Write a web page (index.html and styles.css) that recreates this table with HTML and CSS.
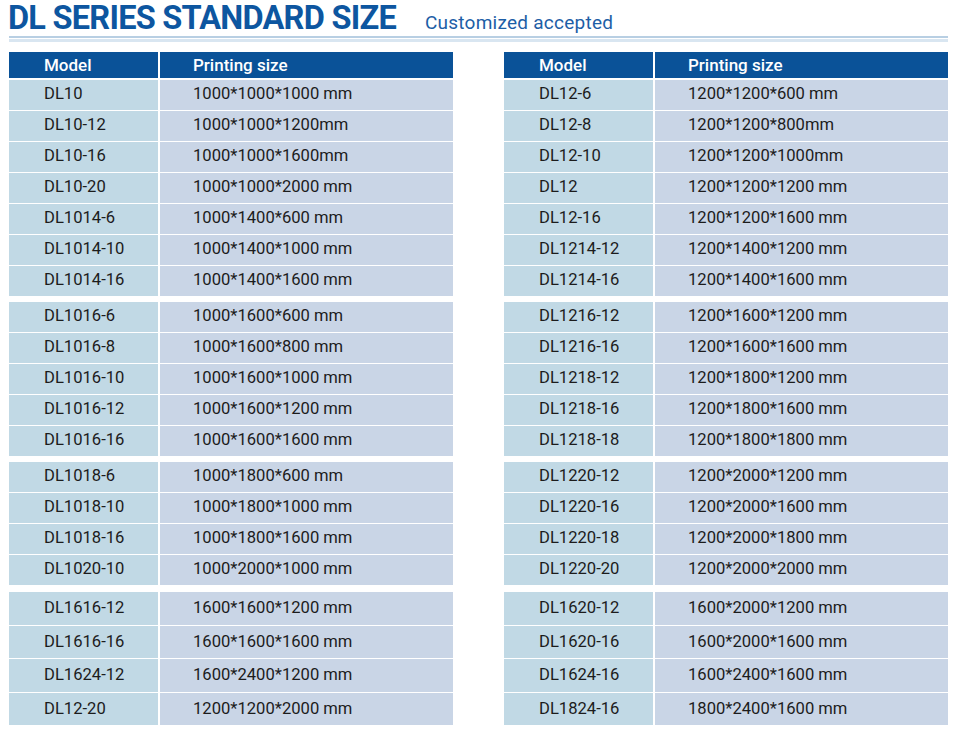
FILE: index.html
```html
<!DOCTYPE html>
<html>
<head>
<meta charset="utf-8">
<link rel="stylesheet" href="styles.css">
</head>
<body>
<div class="page">
  <div class="title-row">
    <h1 class="title">DL SERIES STANDARD SIZE</h1>
    <span class="subtitle">Customized accepted</span>
  </div>
  <div class="rule"></div>
  <div class="tables">
    <div class="table">
      <div class="row head"><div class="c1">Model</div><div class="c2">Printing size</div></div>
      <div class="group">
        <div class="row"><div class="c1">DL10</div><div class="c2">1000*1000*1000 mm</div></div>
        <div class="row"><div class="c1">DL10-12</div><div class="c2">1000*1000*1200mm</div></div>
        <div class="row"><div class="c1">DL10-16</div><div class="c2">1000*1000*1600mm</div></div>
        <div class="row"><div class="c1">DL10-20</div><div class="c2">1000*1000*2000 mm</div></div>
        <div class="row"><div class="c1">DL1014-6</div><div class="c2">1000*1400*600 mm</div></div>
        <div class="row"><div class="c1">DL1014-10</div><div class="c2">1000*1400*1000 mm</div></div>
        <div class="row"><div class="c1">DL1014-16</div><div class="c2">1000*1400*1600 mm</div></div>
      </div>
      <div class="group">
        <div class="row"><div class="c1">DL1016-6</div><div class="c2">1000*1600*600 mm</div></div>
        <div class="row"><div class="c1">DL1016-8</div><div class="c2">1000*1600*800 mm</div></div>
        <div class="row"><div class="c1">DL1016-10</div><div class="c2">1000*1600*1000 mm</div></div>
        <div class="row"><div class="c1">DL1016-12</div><div class="c2">1000*1600*1200 mm</div></div>
        <div class="row"><div class="c1">DL1016-16</div><div class="c2">1000*1600*1600 mm</div></div>
      </div>
      <div class="group">
        <div class="row"><div class="c1">DL1018-6</div><div class="c2">1000*1800*600 mm</div></div>
        <div class="row"><div class="c1">DL1018-10</div><div class="c2">1000*1800*1000 mm</div></div>
        <div class="row"><div class="c1">DL1018-16</div><div class="c2">1000*1800*1600 mm</div></div>
        <div class="row"><div class="c1">DL1020-10</div><div class="c2">1000*2000*1000 mm</div></div>
      </div>
      <div class="group last">
        <div class="row"><div class="c1">DL1616-12</div><div class="c2">1600*1600*1200 mm</div></div>
        <div class="row"><div class="c1">DL1616-16</div><div class="c2">1600*1600*1600 mm</div></div>
        <div class="row"><div class="c1">DL1624-12</div><div class="c2">1600*2400*1200 mm</div></div>
        <div class="row"><div class="c1">DL12-20</div><div class="c2">1200*1200*2000 mm</div></div>
      </div>
    </div>
    <div class="table">
      <div class="row head"><div class="c1">Model</div><div class="c2">Printing size</div></div>
      <div class="group">
        <div class="row"><div class="c1">DL12-6</div><div class="c2">1200*1200*600 mm</div></div>
        <div class="row"><div class="c1">DL12-8</div><div class="c2">1200*1200*800mm</div></div>
        <div class="row"><div class="c1">DL12-10</div><div class="c2">1200*1200*1000mm</div></div>
        <div class="row"><div class="c1">DL12</div><div class="c2">1200*1200*1200 mm</div></div>
        <div class="row"><div class="c1">DL12-16</div><div class="c2">1200*1200*1600 mm</div></div>
        <div class="row"><div class="c1">DL1214-12</div><div class="c2">1200*1400*1200 mm</div></div>
        <div class="row"><div class="c1">DL1214-16</div><div class="c2">1200*1400*1600 mm</div></div>
      </div>
      <div class="group">
        <div class="row"><div class="c1">DL1216-12</div><div class="c2">1200*1600*1200 mm</div></div>
        <div class="row"><div class="c1">DL1216-16</div><div class="c2">1200*1600*1600 mm</div></div>
        <div class="row"><div class="c1">DL1218-12</div><div class="c2">1200*1800*1200 mm</div></div>
        <div class="row"><div class="c1">DL1218-16</div><div class="c2">1200*1800*1600 mm</div></div>
        <div class="row"><div class="c1">DL1218-18</div><div class="c2">1200*1800*1800 mm</div></div>
      </div>
      <div class="group">
        <div class="row"><div class="c1">DL1220-12</div><div class="c2">1200*2000*1200 mm</div></div>
        <div class="row"><div class="c1">DL1220-16</div><div class="c2">1200*2000*1600 mm</div></div>
        <div class="row"><div class="c1">DL1220-18</div><div class="c2">1200*2000*1800 mm</div></div>
        <div class="row"><div class="c1">DL1220-20</div><div class="c2">1200*2000*2000 mm</div></div>
      </div>
      <div class="group last">
        <div class="row"><div class="c1">DL1620-12</div><div class="c2">1600*2000*1200 mm</div></div>
        <div class="row"><div class="c1">DL1620-16</div><div class="c2">1600*2000*1600 mm</div></div>
        <div class="row"><div class="c1">DL1624-16</div><div class="c2">1600*2400*1600 mm</div></div>
        <div class="row"><div class="c1">DL1824-16</div><div class="c2">1800*2400*1600 mm</div></div>
      </div>
    </div>
  </div>
</div>
</body>
</html>
```
FILE: styles.css
```css
html, body {
  margin: 0;
  padding: 0;
  background: #ffffff;
}
.page {
  width: 956px;
  height: 731px;
  padding: 0 8px 0 9px;
  box-sizing: border-box;
  font-family: Roboto, "Liberation Sans", sans-serif;
  color: #1c1c1c;
}
.title-row {
  display: flex;
  align-items: baseline;
  margin-left: -1px;
}
.title {
  margin: 0;
  font-size: 32.5px;
  font-weight: 700;
  color: #0d56a0;
  letter-spacing: -0.75px;
  line-height: 36px;
  white-space: nowrap;
}
.subtitle {
  margin-left: 29px;
  font-size: 19px;
  line-height: 22px;
  color: #1d5ea6;
  letter-spacing: 0.25px;
  white-space: nowrap;
}
.rule {
  height: 2px;
  background: #b8cfe3;
  border-bottom: 1px solid #ffffff;
  box-shadow: 0 3px 0 0 #d9e6f1;
  margin-bottom: 13px;
}
.tables {
  display: flex;
  gap: 51px;
}
.table {
  width: 444px;
  display: flex;
  flex-direction: column;
}
.row {
  display: grid;
  grid-template-columns: 149px 293px;
  column-gap: 2px;
  height: 30px;
  font-size: 16.6px;
  line-height: 28px;
}
.group {
  display: flex;
  flex-direction: column;
  gap: 1px;
  margin-bottom: 6px;
}
.group:last-child {
  margin-top: 1px;
}
.row .c1 {
  background: #c1d9e5;
  padding-left: 35px;
}
.row .c2 {
  background: #c9d5e6;
  padding-left: 33px;
}
.row.head {
  height: 26px;
  line-height: 26px;
  margin-bottom: 2px;
  font-weight: 500;
  font-size: 17px;
  color: #ffffff;
}
.row.head .c1,
.row.head .c2 {
  background: #0a5298;
}
.group.last .row {
  height: 32.5px;
  line-height: 31px;
}
```
